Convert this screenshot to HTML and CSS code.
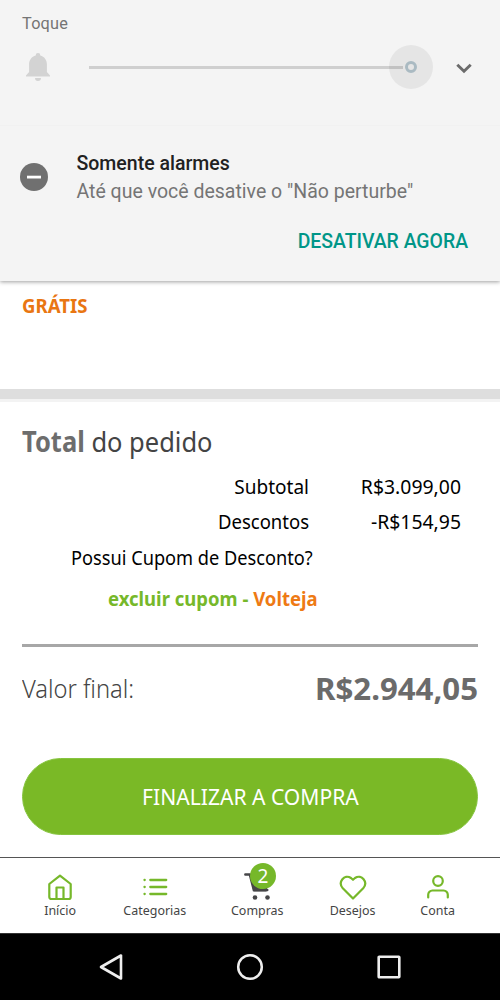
FILE: index.html
```html
<!DOCTYPE html>
<html lang="pt-BR">
<head>
<meta charset="utf-8">
<title>Total do pedido</title>
<link rel="stylesheet" href="styles.css">
</head>
<body>
<section class="panel">
  <div class="ring-label">Toque</div>
  <div class="volume">
    <svg class="bell" width="26" height="30" viewBox="0 0 26 30"><path fill="#d3d3d3" d="M13 1a2.300 2.300 0 0 1 2.300 2.400c4 1 6.600 4.500 6.600 8.800V20l3.100 3.600V24.500H1V23.600L4.100 20V12.200c0-4.300 2.600-7.800 6.600-8.800A2.300 2.300 0 0 1 13 1zM10 26h6a3 3 0 0 1-6 0z"/></svg>
    <div class="track"></div>
    <div class="thumb"><i></i></div>
    <svg class="chevron" width="16" height="11" viewBox="0 0 16 11"><path d="M1.300 1.700 8 8.300l6.700-6.600" fill="none" stroke="#6b6b6b" stroke-width="2.900"/></svg>
  </div>
  <div class="dnd">
    <svg width="28" height="28" viewBox="0 0 28 28"><circle cx="14" cy="14" r="14" fill="#707070"/><path d="M7 14.100h14" stroke="#fff" stroke-width="2.800"/></svg>
    <div class="dnd-text"><strong>Somente alarmes</strong><span>Até que você desative o "Não perturbe"</span></div>
  </div>
  <div class="action"><span>DESATIVAR AGORA</span></div>
</section>
<main class="order">
  <div class="free"><span>GRÁTIS</span></div>
  <div class="divider"></div>
  <h1><b>Total</b> <span>do pedido</span></h1>
  <div class="line"><span class="name subtotal">Subtotal</span><span class="price">R$3.099,00</span></div>
  <div class="line"><span class="name discounts">Descontos</span><span class="price minus">-R$154,95</span></div>
  <div class="coupon-q"><span>Possui Cupom de Desconto?</span></div>
  <div class="coupon"><span class="remove">excluir cupom -</span> <span class="code">Volteja</span></div>
  <div class="final"><span class="final-label">Valor final:</span><span class="final-price">R$2.944,05</span></div>
  <button class="buy"><span>FINALIZAR A COMPRA</span></button>
</main>
<nav class="tabs">
  <a class="tab home"><svg width="26" height="28" viewBox="0 0 26 28"><g fill="none" stroke="#76b82a" stroke-width="2.200" stroke-linejoin="round"><path d="M2.300 11 13 2.700 23.700 11v13a2 2 0 0 1-2 2H4.300a2 2 0 0 1-2-2z"/><path d="M9.500 26V14.500h7V26"/></g></svg><span>Início</span></a>
  <a class="tab cats"><svg width="26" height="28" viewBox="0 0 26 28"><path d="M8.300 7h15.900M8.300 14h15.900M8.300 21h15.900M2.500 7h.2M2.500 14h.2M2.500 21h.2" stroke="#76b82a" stroke-width="2.300" stroke-linecap="round"/></svg><span>Categorias</span></a>
  <a class="tab cart"><svg width="28" height="28" viewBox="0 0 28 28"><path d="M1.300 1.500h4.500l4 15.500h13.500" fill="none" stroke="#464648" stroke-width="2.400" stroke-linecap="round"/><path d="M6 4h19l-2.500 14.500H9.500z" fill="#464648"/><circle cx="11" cy="24.500" r="2.300" fill="#464648"/><circle cx="23.500" cy="24.500" r="2.300" fill="#464648"/></svg><em>2</em><span>Compras</span></a>
  <a class="tab wish"><svg width="28" height="28" viewBox="0 0 28 28"><path d="M14 25.500 3.800 15.200C-1.500 9.200 5.300.7 12 5l2 1.800L16 5C22.700.7 29.500 9.200 24.200 15.200z" fill="none" stroke="#76b82a" stroke-width="2.200" stroke-linejoin="round"/></svg><span>Desejos</span></a>
  <a class="tab user"><svg width="26" height="28" viewBox="0 0 26 28"><g fill="none" stroke="#76b82a" stroke-width="2.200" stroke-linecap="round"><circle cx="13" cy="8" r="4.800"/><path d="M3.200 24.500v-2.800a4.200 4.200 0 0 1 4.200-4.200h11.200a4.200 4.200 0 0 1 4.200 4.200v2.800"/></g></svg><span>Conta</span></a>
</nav>
<footer class="system">
  <svg width="26" height="28" viewBox="0 0 26 28"><path d="M23 2.500v23L3 14z" fill="none" stroke="#eee" stroke-width="2.600" stroke-linejoin="round"/></svg>
  <svg width="28" height="28" viewBox="0 0 28 28"><circle cx="14" cy="14" r="11.800" fill="none" stroke="#eee" stroke-width="2.500"/></svg>
  <svg width="26" height="26" viewBox="0 0 26 26"><rect x="2.700" y="2.700" width="20.600" height="20.600" rx=".5" fill="none" stroke="#eee" stroke-width="2.600"/></svg>
</footer>
</body>
</html>
```
FILE: styles.css
```css
* { box-sizing: border-box; }
body { margin: 0; width: 500px; height: 1000px; overflow: hidden; background: #fff; font-family: "Noto Sans", sans-serif; display: flex; flex-direction: column; white-space: nowrap; }
svg { display: block; flex: none; }

.panel { height: 281px; background: #f4f4f4; box-shadow: 0 1px 4px rgba(0,0,0,.38); font-family: Roboto, sans-serif; color: #757575; flex: none; z-index: 1; }
.ring-label { padding: 13px 0 0 22px; height: 45px; line-height: 21px; font-size: 16.300px; letter-spacing: .2px; }
.volume { height: 81px; padding-left: 25px; display: flex; align-items: flex-start; border-bottom: 1px solid #f1f1f1; }
.bell { margin-top: 7px; }
.track { width: 314px; height: 3px; margin: 21px 0 0 38px; background: #cfcfcf; }
.thumb { width: 44px; height: 44px; margin-left: -14px; border-radius: 50%; background: rgba(0,0,0,.06); display: flex; align-items: center; justify-content: center; }
.thumb i { width: 12px; height: 12px; border: 3px solid #aabac2; border-radius: 50%; }
.chevron { margin: 18px 0 0 23px; }
.dnd { height: 84px; padding: 24px 0 0 19.500px; display: flex; gap: 29px; }
.dnd > svg { margin-top: 12.500px; }
.dnd-text { display: flex; flex-direction: column; font-size: 19.500px; line-height: 28px; }
.dnd-text strong { font-weight: 500; color: #212121; }
.action { padding: 17px 32px 0 0; text-align: right; line-height: 29px; font-size: 19.400px; font-weight: 500; color: #009688; }

/* The order texts are set slightly condensed. */
.free span, h1, .name, .price, .coupon-q span, .coupon, .final-label, .buy span, .tab span { display: inline-block; transform: scaleX(.94); transform-origin: left; }

.order { height: 576px; padding: 0 22px; flex: none; }
.free { height: 108px; padding-top: 11px; line-height: 28px; font-size: 20px; font-weight: 700; color: #e97612; }
.free span { transform: scaleX(.93); }
.divider { height: 13px; margin: 0 -22px; background: linear-gradient(#dedede 10px, #f3f3f3 10px); }
h1 { margin: 21px 0 0; height: 45.500px; line-height: 36px; font-size: 28px; font-weight: 400; color: #444; vertical-align: top; }
h1 { transform: scaleX(.91); }
h1 b { color: #6d6d6d; }
.line { height: 35.500px; line-height: 35.500px; padding-right: 17px; font-size: 20px; color: #000; display: flex; }
.name { width: 287px; text-align: right; transform-origin: right; }
.subtotal { transform: scaleX(.95); }
.discounts { transform: scaleX(.925); }
.price { flex: 1; text-align: right; transform: scaleX(.97); transform-origin: right; }
.coupon-q { height: 35px; line-height: 35px; padding-left: 49px; font-size: 20px; color: #000; }
.coupon-q span { transform: scaleX(.91); }
.coupon { display: block; height: 69px; margin-left: 86px; padding: 8px 0 0; line-height: 32px; font-size: 19.700px; font-weight: 700; color: #76b82a; }
.code { color: #ee7a14; }
.final { height: 114px; padding-top: 21px; border-top: 3px solid #a7a7a7; display: flex; justify-content: space-between; line-height: 40px; }
.final-label { font-size: 25.500px; font-weight: 300; color: #444; transform: scaleX(.93); }
.final-price { font-size: 31.200px; font-weight: 700; color: #6b6b6b; }
.buy { display: block; width: 456px; height: 77px; padding: 0; border: 1px solid #86c440; border-radius: 39px; background: #7ab926; font: 400 21.700px "Noto Sans", sans-serif; color: #fff; }
.buy span { transform: scaleX(.972); transform-origin: center; }

.tabs { height: 77px; border-top: 1px solid #555; border-bottom: 1px solid #333; flex: none; display: flex; padding: 15px 0 0 23px; }
.tab { flex: none; width: 74px; display: flex; flex-direction: column; align-items: center; font-size: 13.400px; line-height: 18px; color: #444; position: relative; }
.tab span { transform-origin: center; transform: scaleX(.93); }
.cats { width: 115px; }
.cart { width: 91px; }
.wish { width: 99px; }
.user { width: 72px; }
em { position: absolute; left: 38px; top: -10px; width: 26px; height: 26px; border-radius: 50%; background: #76b82a; color: #fff; font: 19px/26px "Noto Sans", sans-serif; text-align: center; }
.system { height: 66px; background: #000; display: flex; align-items: center; justify-content: center; gap: 112px; flex: none; }
```
